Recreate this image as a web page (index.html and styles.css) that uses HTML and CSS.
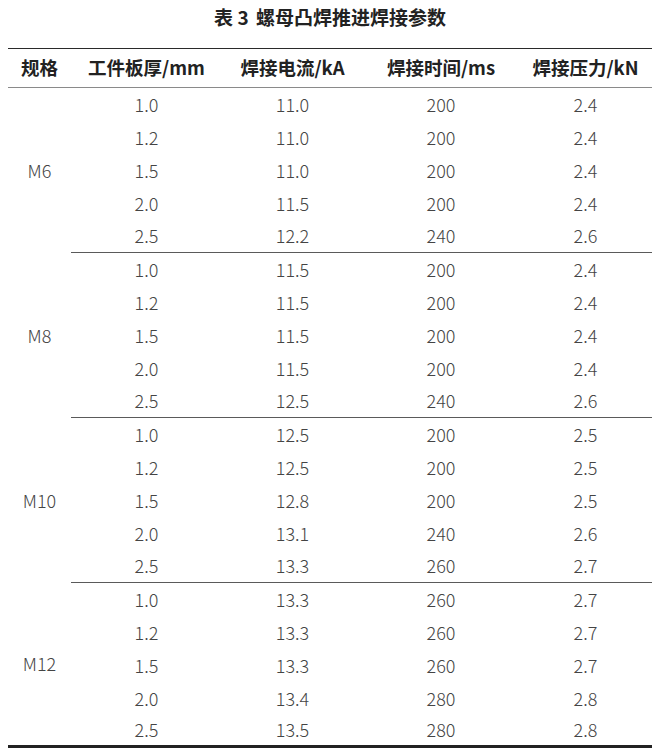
FILE: index.html
```html
<!DOCTYPE html>
<html lang="zh">
<head>
<meta charset="utf-8">
<title>表 3 螺母凸焊推进焊接参数</title>
<link rel="stylesheet" href="styles.css">
</head>
<body>
<div class="page">
  <div class="title">表 3 <span class="sp"></span>螺母凸焊推进焊接参数</div>
  <div class="tbl">
    <div class="th">规格</div>
    <div class="th">工件板厚/mm</div>
    <div class="th">焊接电流/kA</div>
    <div class="th">焊接时间/ms</div>
    <div class="th">焊接压力/kN</div>

    <div class="spec">M6</div>
    <div class="td">1.0</div><div class="td">11.0</div><div class="td">200</div><div class="td">2.4</div>
    <div class="td">1.2</div><div class="td">11.0</div><div class="td">200</div><div class="td">2.4</div>
    <div class="td">1.5</div><div class="td">11.0</div><div class="td">200</div><div class="td">2.4</div>
    <div class="td">2.0</div><div class="td">11.5</div><div class="td">200</div><div class="td">2.4</div>
    <div class="td sep">2.5</div><div class="td sep">12.2</div><div class="td sep">240</div><div class="td sep">2.6</div>

    <div class="spec">M8</div>
    <div class="td">1.0</div><div class="td">11.5</div><div class="td">200</div><div class="td">2.4</div>
    <div class="td">1.2</div><div class="td">11.5</div><div class="td">200</div><div class="td">2.4</div>
    <div class="td">1.5</div><div class="td">11.5</div><div class="td">200</div><div class="td">2.4</div>
    <div class="td">2.0</div><div class="td">11.5</div><div class="td">200</div><div class="td">2.4</div>
    <div class="td sep">2.5</div><div class="td sep">12.5</div><div class="td sep">240</div><div class="td sep">2.6</div>

    <div class="spec">M10</div>
    <div class="td">1.0</div><div class="td">12.5</div><div class="td">200</div><div class="td">2.5</div>
    <div class="td">1.2</div><div class="td">12.5</div><div class="td">200</div><div class="td">2.5</div>
    <div class="td">1.5</div><div class="td">12.8</div><div class="td">200</div><div class="td">2.5</div>
    <div class="td">2.0</div><div class="td">13.1</div><div class="td">240</div><div class="td">2.6</div>
    <div class="td sep">2.5</div><div class="td sep">13.3</div><div class="td sep">260</div><div class="td sep">2.7</div>

    <div class="spec end">M12</div>
    <div class="td">1.0</div><div class="td">13.3</div><div class="td">260</div><div class="td">2.7</div>
    <div class="td">1.2</div><div class="td">13.3</div><div class="td">260</div><div class="td">2.7</div>
    <div class="td">1.5</div><div class="td">13.3</div><div class="td">260</div><div class="td">2.7</div>
    <div class="td">2.0</div><div class="td">13.4</div><div class="td">280</div><div class="td">2.8</div>
    <div class="td end">2.5</div><div class="td end">13.5</div><div class="td end">280</div><div class="td end">2.8</div>
  </div>
</div>
</body>
</html>
```
FILE: styles.css
```css
html, body {
  margin: 0;
  padding: 0;
  background: #ffffff;
}

.page {
  padding: 0 7px 0 8px;
  font-family: "Noto Sans CJK SC", "Noto Sans", sans-serif;
}

.title {
  height: 48px;
  line-height: 34px;
  text-align: center;
  font-size: 19px;
  font-weight: 700;
  color: #222222;
}

.title .sp {
  display: inline-block;
  width: 3px;
}

.tbl {
  display: grid;
  grid-template-columns: 63px 151px 141px 156px 133px;
  grid-template-rows: 40px;
  grid-auto-rows: 33px;
}

.th,
.td,
.spec {
  box-sizing: border-box;
  display: flex;
  align-items: center;
  justify-content: center;
  font-size: 18px;
  padding-bottom: 2px;
}

.th {
  font-size: 18.5px;
  font-weight: 700;
  color: #222222;
  border-top: 1px solid #2a2a2a;
  border-bottom: 1px solid #8a8a8a;
}

.td,
.spec {
  font-weight: 300;
  color: #444444;
}

.spec {
  grid-row: span 5;
}

.td.sep {
  border-bottom: 1px solid #5a5a5a;
}

.td.end,
.spec.end {
  border-bottom: 3px solid #222222;
}
```
